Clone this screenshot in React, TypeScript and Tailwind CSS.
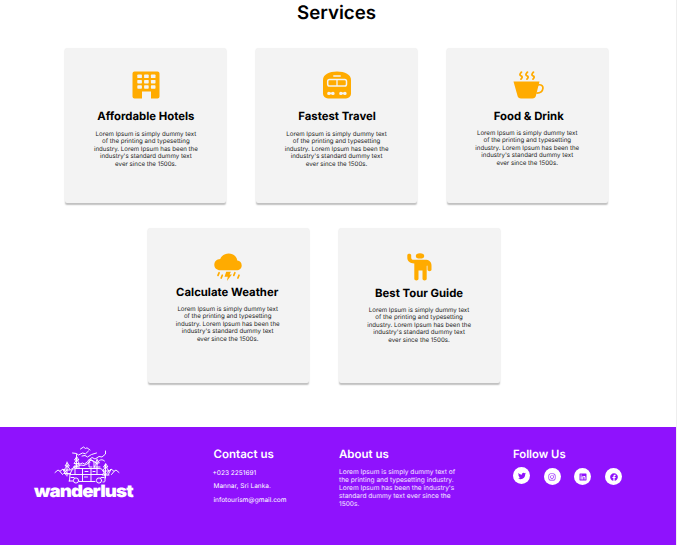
import type { ReactNode } from "react";
import { FaTwitter, FaLinkedin, FaFacebook, FaInstagram } from "react-icons/fa";

const ORANGE = "#ffab00";

function HotelIcon() {
  return (
    <svg className="block h-[28px] w-[28px]" viewBox="0 0 28 28">
      <path
        fill={ORANGE}
        d="M2.5 .5h23a2 2 0 0 1 2 2v23a2 2 0 0 1-2 2H19v-7h-9v7H2.500a2 2 0 0 1-2-2v-23a2 2 0 0 1 2-2z"
      />
      {[3.6, 8.9, 14.2].map((y) =>
        [5.3, 12.1, 18.9].map((x) => (
          <rect key={`${x}-${y}`} x={x} y={y} width="4.6" height="3.5" rx=".7" fill="#f4f4f4" />
        )),
      )}
    </svg>
  );
}

function TrainIcon() {
  return (
    <svg className="block h-[28px] w-[28px]" viewBox="0 0 28 28">
      <path fill={ORANGE} d="M0 9C0 3.500 6 .5 14 .5S28 3.500 28 9v13.500a5 5 0 0 1-5 5H5a5 5 0 0 1-5-5z" />
      <path d="M10.800 4.900h6.400" stroke="#f4f4f4" strokeWidth="1.5" strokeLinecap="round" />
      <rect x="4.700" y="8.500" width="18.800" height="6.500" rx="1.800" fill="none" stroke="#f4f4f4" strokeWidth="1.500" />
      <path d="M14 8.500V15" stroke="#f4f4f4" strokeWidth="1.300" />
      <path
        d="M5.800 22.400h.1M9.900 22.400h.1M17.800 22.400h.1M21.900 22.400h.1"
        stroke="#f4f4f4"
        strokeWidth="3.300"
        strokeLinecap="round"
      />
      <path d="M6 22.400h4M18 22.400h4" stroke="#f4f4f4" strokeWidth="1.700" />
    </svg>
  );
}

function CupIcon() {
  return (
    <svg className="ml-[3px] block h-[28px] w-[31px]" viewBox="0 0 31 28">
      <path fill={ORANGE} d="M.5 10.500h26l-3.600 14.200a3.600 3.600 0 0 1-3.500 2.800H8a3.600 3.600 0 0 1-3.500-2.800z" />
      <g fill="none" stroke={ORANGE} strokeLinecap="round">
        <path strokeWidth="1.700" d="M25.500 13.800c3.200-.4 4.700 1.200 4.400 3.600-.3 2.700-2.400 4.600-6 4.700" />
        <path
          strokeWidth="1.800"
          d="M8.400 1.200c-2.500 2.700-1.300 3.200 0 3.900 1.100.8.900 1.900-.4 3M14.400 1.200c-2.500 2.700-1.300 3.200 0 3.900 1.100.8.900 1.900-.4 3M20.400 1.200c-2.500 2.700-1.300 3.200 0 3.900 1.100.8.900 1.900-.4 3"
        />
      </g>
    </svg>
  );
}

function WeatherIcon() {
  return (
    <svg className="-ml-[2px] block h-[28px] w-[28px]" viewBox="0 0 28 28">
      <path
        fill={ORANGE}
        d="M6.300 17.300C2.800 17.300.3 15 .3 11.800c0-3.200 2.400-5.600 5.900-5.800C7.500 2.700 10.600.5 14.800.5c4.500 0 7.900 2.800 8.500 7 2.700.3 4.400 2.300 4.400 4.900 0 2.900-2.200 4.900-5.200 4.900z"
      />
      <path
        d="M5.100 19.700L4 22.400M8.300 22.200L7.200 25M20.900 19.700l-1.100 2.700M25 22.200L23.900 25"
        stroke={ORANGE}
        strokeWidth="1.700"
        strokeLinecap="round"
      />
      <path fill={ORANGE} d="M12.200 18.800h4.700l-1.300 2.700h2.300l-5 6.500.9-4.300h-3.300z" />
    </svg>
  );
}

function GuideIcon() {
  return (
    <svg className="ml-[1px] block h-[28px] w-[25px]" viewBox="0 0 25 28">
      <ellipse cx="13" cy="2.900" rx="4.200" ry="2.600" fill={ORANGE} />
      <path
        fill={ORANGE}
        d="M.3 2.200C.3.200 4.200.2 4.200 2.200v2.300c0 1.600.8 2.300 2.400 2.300H18c4 0 6.500 1.900 6.500 5.600v4.300c0 1.900-4 1.900-4 0v-3.500c0-.8-.8-.8-.8 0v12.600c0 2.200-4.200 2.200-4.200 0v-8.300h-4v8.300c0 2.200-4.200 2.200-4.200 0V10.500C2.800 10.200.3 8 .3 4.700z"
      />
    </svg>
  );
}

type CardProps = {
  icon: ReactNode;
  title: string;
  className: string;
  titleClass: string;
  textClass: string;
};

function ServiceCard({ icon, title, className, titleClass, textClass }: CardProps) {
  return (
    <article
      className={`flex h-[155px] w-[161px] shrink-0 flex-col items-center rounded-[2px] bg-[#f3f3f3] shadow-[0_1.5px_1.5px_rgba(0,0,0,0.25)] ${className}`}
    >
      {icon}
      <h2 className={`text-[11.35px] leading-[14px] font-bold whitespace-nowrap text-black ${titleClass}`}>{title}</h2>
      <p className={`text-center text-[6.15px] leading-[7.5px] whitespace-nowrap text-[#222] ${textClass}`}>
        Lorem Ipsum is simply dummy text
        <br />
        of the printing and typesetting
        <br />
        industry. Lorem Ipsum has been the
        <br />
        industry's standard dummy text
        <br />
        ever since the 1500s.
      </p>
    </article>
  );
}

function CamperDrawing() {
  return (
    <svg
      className="block h-[38px] w-[66px]"
      viewBox="0 0 66 38"
      fill="none"
      stroke="white"
      strokeWidth=".95"
      strokeLinecap="round"
      strokeLinejoin="round"
    >
      <path d="M26.500 3l3-2 2 1.500 1.500-.7L36 4M18.500 7l4 .5 2 1.500 4-2 3 .8 3-2.800M28 10l3-.5 2.500 1.500 4-2.500 5-1.500M34 14.500l4-3 3 1.500 4-2.500 3 .5 3.500-3V5" />
      <path d="M17 23.500l5.500-4 6-2.500 2 1 6-4.500 3 1.500 4 3M20 21.500l7-2.500 3 .5 6-3" />
      <path d="M1 26.500l3-2.500 2 1.300 3-2.300 5 5.500M6 25.500l2.500 3M9 23.500l3 5.500M65 26.500l-3-2.500-2 1.300-3-2.300-5 5.500M60 25.500l-2.500 3M57 23.500L54 29" />
      <path d="M22.500 8.500v13M22.500 11l-2 3h4zM22.500 14l-2.500 3.500h5zM22.500 18l-3 3h6M13 16v14M13 17l-2 3h4zM13 20l-3 4h6zM13 24l-3.500 3.500h7" />
      <path d="M43 13v9M43 14l-2 3h4zM43 17l-3 4h6M51.500 18v14M51.500 18l-2 3h4zM51.500 21l-3 4h6zM51.500 25l-3.500 4h7" />
      <path d="M44.500 15.500c1-2 4-2.500 6-.5M34 17l3-3 3 2v6M35 18v3h3" />
      <path d="M18 24c1-1 2-1.500 4-1.500h23c3 0 4 1.500 5 4l1 4v4.500c0 1-1 1-2 1M15.500 35l.5-7 2-4M15 35h4M25 35.500h16M16 28.500h33M21 23v5M28.500 23v12.500M37 23v12.500M43 23v5.500" />
      <circle cx="22" cy="34.500" r="2.600" />
      <circle cx="45" cy="34.500" r="2.600" />
      <path d="M31 25.500h3M39 25.500h2M30.500 31h3M17 31.500h3M47 31.500h3" />
    </svg>
  );
}

function Social({ children, className = "" }: { children: ReactNode; className?: string }) {
  return (
    <span className={`flex h-[17px] w-[17px] items-center justify-center rounded-full bg-white text-[#8f12fd] ${className}`}>
      {children}
    </span>
  );
}

export default function App() {
  return (
    <div className="h-[545px] w-[677px] overflow-hidden border-r border-[#eeeeee] bg-white font-['Inter',sans-serif] [text-rendering:geometricPrecision]">
      <main className="h-[427px]">
        <h1 className="flex h-[48px] w-[673px] justify-center text-[18.7px] leading-[25px] font-semibold text-black">
          Services
        </h1>
        <section className="flex gap-[29.7px] pl-[65.4px]">
          <ServiceCard icon={<HotelIcon />} title="Affordable Hotels" className="pt-[22.7px]" titleClass="mt-[10px]" textClass="mt-[8px]" />
          <ServiceCard icon={<TrainIcon />} title="Fastest Travel" className="pt-[22.7px]" titleClass="ml-[1px] mt-[10px]" textClass="mt-[8px]" />
          <ServiceCard icon={<CupIcon />} title="Food & Drink" className="pt-[22.7px]" titleClass="ml-[3px] mt-[10px]" textClass="mt-[7px]" />
        </section>
        <section className="mt-[25px] flex gap-[29.4px] pl-[148.2px]">
          <ServiceCard icon={<WeatherIcon />} title="Calculate Weather" className="pt-[25px]" titleClass="-ml-[3px] mt-[3.5px]" textClass="-ml-[2px] mt-[7px]" />
          <ServiceCard icon={<GuideIcon />} title="Best Tour Guide" className="pt-[25px]" titleClass="mt-[4.5px]" textClass="mt-[7px]" />
        </section>
      </main>
      <footer className="flex h-[118px] bg-[#8f12fd] text-white">
        <div className="w-[213.5px] pt-[19px] pl-[34px]">
          <div className="pl-[20px]">
            <CamperDrawing />
          </div>
          <div className="origin-left scale-x-[1.1] text-[17px] leading-[16px] font-black tracking-[-0.8px]">wanderlust</div>
        </div>
        <div className="w-[125.5px] pt-[20px]">
          <h3 className="text-[11.5px] leading-[14px] font-semibold">Contact us</h3>
          <ul className="mt-[5.5px] text-[6.55px] leading-[13.7px]">
            <li className="-ml-[1px]">+023 2251691</li>
            <li>Mannar, Sri Lanka.</li>
            <li>infotourism@gmail.com</li>
          </ul>
        </div>
        <div className="w-[174px] pt-[20px]">
          <h3 className="text-[11.5px] leading-[14px] font-semibold">About us</h3>
          <p className="mt-[6.5px] text-[6.6px] leading-[8px] whitespace-nowrap text-white/90">
            Lorem Ipsum is simply dummy text of
            <br />
            the printing and typesetting industry.
            <br />
            Lorem Ipsum has been the industry's
            <br />
            standard dummy text ever since the
            <br />
            1500s.
          </p>
        </div>
        <div className="pt-[20px]">
          <h3 className="text-[11.3px] leading-[14px] font-semibold">Follow Us</h3>
          <div className="mt-[6px] flex gap-[13.7px]">
            <Social><FaTwitter size={8} /></Social>
            <Social className="mt-px"><FaInstagram size={8} /></Social>
            <Social className="mt-px"><FaLinkedin size={8} /></Social>
            <Social className="mt-px"><FaFacebook size={8} /></Social>
          </div>
        </div>
      </footer>
    </div>
  );
}
